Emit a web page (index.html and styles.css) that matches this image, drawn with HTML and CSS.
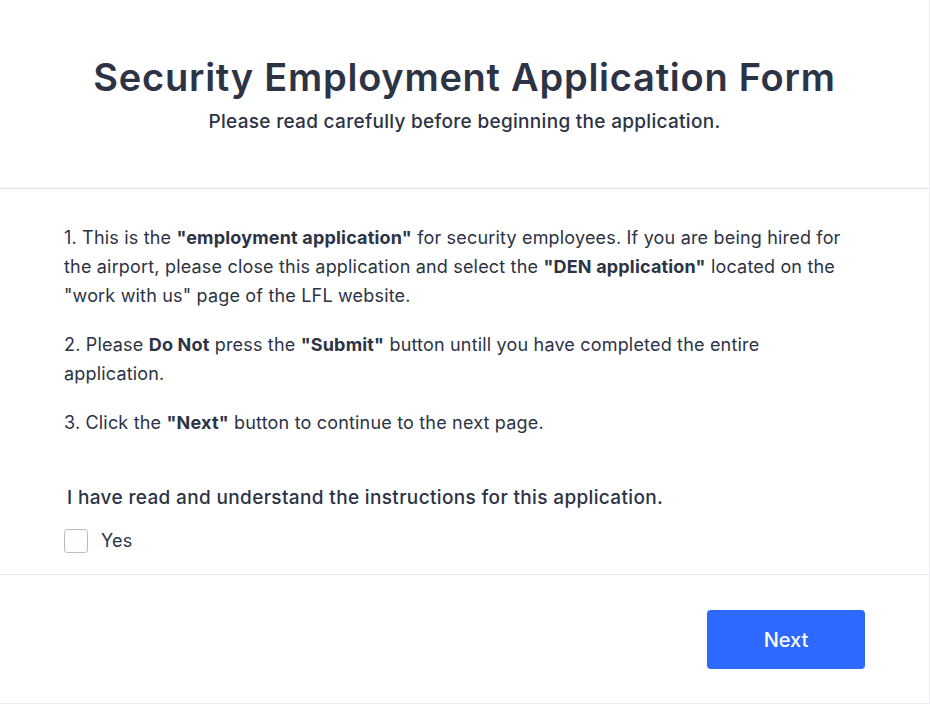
FILE: index.html
```html
<!DOCTYPE html>
<html lang="en">
<head>
<meta charset="utf-8">
<title>Security Employment Application Form</title>
<link rel="stylesheet" href="styles.css">
</head>
<body>
<div class="form">
  <header class="form-header">
    <h1 class="title">Security Employment Application Form</h1>
    <p class="subtitle">Please read carefully before beginning the application.</p>
  </header>
  <section class="form-body">
    <div class="instructions">
      <p>1. This is the <b>"employment application"</b> for security employees. If you are being hired for the airport, please close this application and select the <b>"DEN application"</b> located on the "work with us" page of the LFL website.</p>
      <p>2. Please <b>Do Not</b> press the <b>"Submit"</b> button untill you have completed the entire application.</p>
      <p>3. Click the <b>"Next"</b> button to continue to the next page.</p>
    </div>
    <div class="question">
      <div class="question-label">I have read and understand the instructions for this application.</div>
      <label class="option">
        <span class="checkbox"></span>
        <span class="option-text">Yes</span>
      </label>
    </div>
  </section>
  <footer class="form-footer">
    <button class="next-btn" type="button">Next</button>
  </footer>
</div>
</body>
</html>
```
FILE: styles.css
```css
html, body {
  margin: 0;
  padding: 0;
  background: #ffffff;
}
body {
  font-family: Inter, "Noto Sans", "Liberation Sans", sans-serif;
  color: #2c3345;
}
.form {
  width: 929px;
  height: 703px;
  border-right: 1px solid #ececf2;
  border-bottom: 1px solid #ececf2;
  display: flex;
  flex-direction: column;
}
.form-header {
  height: 189px;
  box-sizing: border-box;
  padding-top: 55px;
  text-align: center;
  border-bottom: 1px solid #dedeeb;
}
.title {
  margin: 0;
  font-size: 38px;
  line-height: 44px;
  font-weight: 600;
  letter-spacing: 0.75px;
  color: #2c3345;
}
.subtitle {
  margin: 11px 0 0;
  font-size: 19px;
  line-height: 24px;
  font-weight: 500;
  letter-spacing: 0.3px;
}
.form-body {
  padding: 34px 64px 0 64px;
  border-bottom: 1px solid #e6e6f0;
  height: 386px;
  box-sizing: border-box;
}
.instructions p {
  margin: 0 0 20px;
  font-size: 18px;
  line-height: 29px;
  letter-spacing: 0.18px;
}
.instructions p:last-child {
  margin-bottom: 0;
}
.instructions b {
  font-weight: 700;
}
.question {
  padding-top: 47px;
  padding-left: 3px;
}
.question-label {
  font-size: 19px;
  line-height: 28px;
  font-weight: 500;
  letter-spacing: 0.35px;
}
.option {
  display: flex;
  align-items: center;
  gap: 13px;
  margin-top: 17px;
  margin-left: -3px;
}
.checkbox {
  width: 22px;
  height: 22px;
  border: 1px solid #b8bdc9;
  border-radius: 3px;
  background: #fff;
}
.option-text {
  font-size: 18px;
  line-height: 24px;
  letter-spacing: 0.2px;
}
.form-footer {
  flex: 1;
  display: flex;
  justify-content: flex-end;
  align-items: flex-start;
  padding: 35px 64px 0 0;
}
.next-btn {
  width: 158px;
  height: 59px;
  border: none;
  border-radius: 4px;
  background: #2e69ff;
  color: #ffffff;
  font-family: Inter, "Noto Sans", sans-serif;
  font-size: 20px;
  font-weight: 500;
}
```
